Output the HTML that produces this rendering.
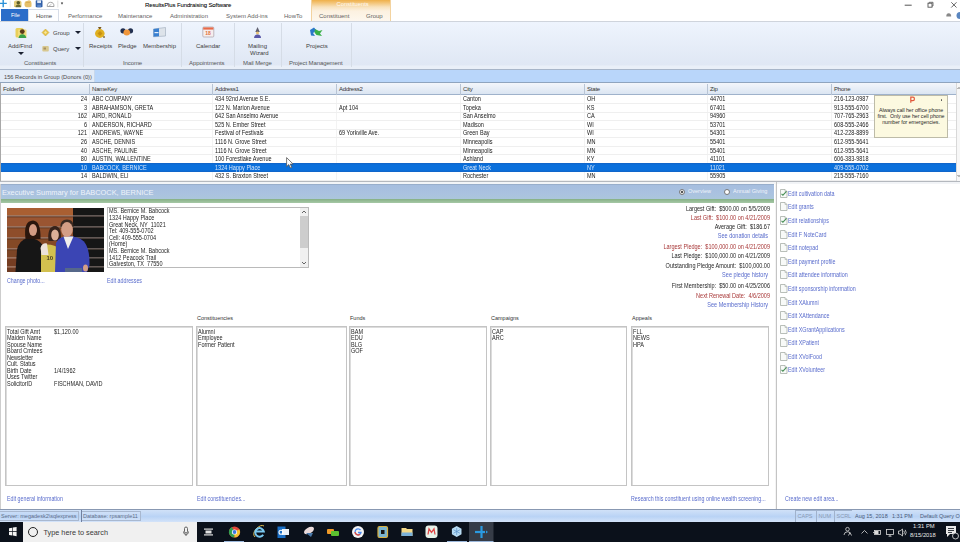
<!DOCTYPE html>
<html><head><meta charset="utf-8"><style>
*{box-sizing:border-box;margin:0;padding:0}
html,body{width:960px;height:542px;overflow:hidden;background:#fff;font-family:"Liberation Sans",sans-serif;color:#222;position:relative}
.ab{position:absolute}
.t{position:absolute;white-space:nowrap;line-height:1}
.s6{font-size:6px}
.c{letter-spacing:-0.2px;color:#1a1a1a}
.g{font-size:6.6px;transform:scaleX(0.84);transform-origin:0 0;color:#262626}
.lnk{color:#586bcc}
.gl{font-size:6.3px;transform:scaleX(0.84);transform-origin:0 0}
.red{color:#a83838}
</style></head><body>

<div class="ab" style="left:0;top:0;width:960px;height:21px;background:#fff"></div>
<div class="ab" style="left:311px;top:0;width:80px;height:21px;background:linear-gradient(#efb04a 0px,#f3c57a 3px,#f8e2bd 7px,#fcf1e0 11px,#fdf7ee 21px);border-left:1px solid #f3d3a0;border-right:1px solid #f3d3a0"></div>
<div class="t" style="left:336.5px;top:2px;font-size:5.8px;color:#fffaf2">Constituents</div>
<div class="t" style="left:145px;top:1.5px;font-size:6px;letter-spacing:-0.12px;color:#000;-webkit-text-stroke:0.06px #000">ResultsPlus Fundraising Software</div>
<svg class="ab" style="left:0;top:0" width="66" height="9" viewBox="0 0 66 9">
<path d="M0 3.4 H6.8 M3.2 0 V7.2" stroke="#2a90d8" stroke-width="1.4"/>
<path d="M10.2 0.5 V7.5" stroke="#e4e4e4" stroke-width="0.8"/>
<path d="M14 2 Q14 0.5 16 0.5 H19.5 Q21.5 0.5 21.5 2.5 V7 H14 Z" fill="#e2cb78"/>
<circle cx="18.3" cy="2.8" r="1.8" fill="#5a5a28"/>
<path d="M15.5 7.2 Q15.6 4.6 18.3 4.6 Q21 4.6 21 7.2 Z" fill="#6a6a30"/>
<path d="M24.5 4 Q24.5 1.2 27 1 L29 0.3 Q31.5 0.5 31.5 3 V6.5 Q31 7.3 29 7.3 H26.5 Q24.5 7 24.5 5 Z" fill="#e6c06a"/>
<path d="M26 2.5 H30" stroke="#c89a40" stroke-width="0.5"/>
<rect x="35.7" y="0.3" width="6.8" height="7" rx="0.8" fill="#3260a8"/>
<rect x="37.2" y="0.3" width="3.8" height="2.8" fill="#dfe8f5"/>
<rect x="37.2" y="4.6" width="3.8" height="2.7" fill="#5a86c8"/>
<path d="M47.2 6.5 Q47.2 2.3 50.6 2.3 Q54 2.3 54 6.5 Z" fill="none" stroke="#9a9a9a" stroke-width="0.9"/>
<path d="M49 6 L51.5 4.2" stroke="#9a9a9a" stroke-width="0.6"/>
<path d="M57.8 0.5 V7.5" stroke="#d8d8d8" stroke-width="0.8"/>
<path d="M60.8 2.5 H63.2 L62 4.8 Z" fill="#333"/>
</svg>
<svg class="ab" style="left:900px;top:0" width="60" height="20" viewBox="900 0 60 20">
<path d="M904.7 5.2 H911.7" stroke="#555" stroke-width="1"/>
<rect x="928" y="3.2" width="4" height="4" fill="none" stroke="#555" stroke-width="0.9"/>
<path d="M929.2 3.2 V2.3 H933 V6 H932" fill="none" stroke="#555" stroke-width="0.8"/>
<path d="M951.3 2.3 L956.5 7.5 M956.5 2.3 L951.3 7.5" stroke="#555" stroke-width="0.9"/>
<path d="M946.3 16.5 Q946.3 13.2 948.7 13.2 Q951.2 13.2 951.2 16.5 Z" fill="#888"/>
<circle cx="960" cy="15.5" r="3.5" fill="#5a86c0"/>
</svg>
<div class="ab" style="left:1px;top:9px;width:27px;height:12px;background:#2b6dc9"></div>
<div class="t" style="left:11px;top:13px;font-size:5.5px;color:#fff">File</div>
<div class="ab" style="left:28px;top:9px;width:31px;height:13px;background:#fdfeff;border:1px solid #d6dde8;border-bottom:none"></div>
<div class="t" style="left:36px;top:13px;font-size:6px;color:#444">Home</div>
<div class="t" style="left:68px;top:13px;font-size:6px;color:#626262">Performance</div>
<div class="t" style="left:118px;top:13px;font-size:6px;color:#626262">Maintenance</div>
<div class="t" style="left:170px;top:13px;font-size:6px;color:#626262">Administration</div>
<div class="t" style="left:226px;top:13px;font-size:6px;color:#626262">System Add-ins</div>
<div class="t" style="left:284px;top:13px;font-size:6px;color:#626262">HowTo</div>
<div class="t" style="left:319px;top:13px;font-size:6px;color:#626262">Constituent</div>
<div class="t" style="left:366px;top:13px;font-size:6px;color:#626262">Group</div>
<div class="ab" style="left:0;top:20.5px;width:960px;height:48.5px;background:linear-gradient(#eef4fd,#e6edf8 50%,#dfe7f4 92%,#e9eff8 93%,#e9eff8);border-top:1px solid #cfd4dc"></div>
<div class="ab" style="left:0;top:69px;width:960px;height:1px;background:#a7b5c9"></div>
<div class="ab" style="left:83px;top:23px;width:1px;height:44px;background:#d5dce6"></div>
<div class="ab" style="left:181px;top:23px;width:1px;height:44px;background:#d5dce6"></div>
<div class="ab" style="left:234px;top:23px;width:1px;height:44px;background:#d5dce6"></div>
<div class="ab" style="left:281px;top:23px;width:1px;height:44px;background:#d5dce6"></div>
<div class="ab" style="left:351px;top:23px;width:1px;height:44px;background:#d5dce6"></div>
<div class="t" style="left:24px;top:60.3px;font-size:6px;letter-spacing:-0.1px;color:#585858">Constituents</div>
<div class="t" style="left:123px;top:60.3px;font-size:6px;letter-spacing:-0.1px;color:#585858">Income</div>
<div class="t" style="left:189px;top:60.3px;font-size:6px;letter-spacing:-0.1px;color:#585858">Appointments</div>
<div class="t" style="left:243px;top:60.3px;font-size:6px;letter-spacing:-0.1px;color:#585858">Mail Merge</div>
<div class="t" style="left:289px;top:60.3px;font-size:6px;letter-spacing:-0.1px;color:#585858">Project Management</div>
<div class="t" style="left:8px;top:43px;font-size:6px;color:#3e3e3e">Add/Find</div>
<div class="t" style="left:89px;top:43px;font-size:6px;color:#3e3e3e">Receipts</div>
<div class="t" style="left:118px;top:43px;font-size:6px;color:#3e3e3e">Pledge</div>
<div class="t" style="left:143px;top:43px;font-size:6px;color:#3e3e3e">Membership</div>
<div class="t" style="left:196px;top:43px;font-size:6px;color:#3e3e3e">Calendar</div>
<div class="t" style="left:248px;top:43px;font-size:6px;color:#3e3e3e">Mailing</div>
<div class="t" style="left:250px;top:50px;font-size:6px;color:#3e3e3e">Wizard</div>
<div class="t" style="left:306px;top:43px;font-size:6px;color:#3e3e3e">Projects</div>
<div class="t" style="left:53px;top:30px;font-size:6px;color:#444">Group</div>
<div class="t" style="left:53px;top:46px;font-size:6px;color:#444">Query</div>
<div class="ab" style="left:74.5px;top:30.5px;width:0;height:0;border-left:3px solid transparent;border-right:3px solid transparent;border-top:3.3px solid #1a2030"></div>
<div class="ab" style="left:74.5px;top:46.5px;width:0;height:0;border-left:3px solid transparent;border-right:3px solid transparent;border-top:3.3px solid #1a2030"></div>
<div class="ab" style="left:18px;top:52px;width:0;height:0;border-left:3px solid transparent;border-right:3px solid transparent;border-top:3.3px solid #1a2030"></div>
<svg class="ab" style="left:0;top:21px" width="340" height="40" viewBox="0 21 340 40">
<g>
<rect x="15.5" y="28" width="8" height="9.5" rx="1.5" fill="#e9cf5a"/>
<rect x="18" y="29.5" width="8.5" height="8.5" rx="1" fill="#f2dc7a"/>
<circle cx="22.3" cy="31.6" r="2.4" fill="#5a3a18"/>
<path d="M18.5 38 Q19 34.2 22.3 34.2 Q25.8 34.2 26.3 38 Z" fill="#3aa048"/>
</g>
<path d="M42 32.5 L45.5 29 L49 32.5 L45.5 36 Z" fill="#e8c448" stroke="#c8a030" stroke-width="0.5"/>
<path d="M44 32.5 L45.5 31 L47 32.5 L45.5 34 Z" fill="#f8e8a0"/>
<rect x="42.3" y="46" width="6.5" height="5.5" rx="1" fill="#d8c890"/>
<rect x="43.5" y="47.5" width="2.5" height="2" fill="#a89060"/>
<path d="M98 27 L101.5 27 L100.5 29 L99 29 Z" fill="#7a5a20"/>
<ellipse cx="99.8" cy="33.5" rx="4.8" ry="4.4" fill="#e0b020"/>
<path d="M97.5 33.5 L100 31 L102.5 33.5 L100 36 Z" fill="#c89010"/>
<circle cx="104" cy="37" r="1" fill="#8a7040"/>
<circle cx="123" cy="30.8" r="2.6" fill="#223050"/>
<circle cx="130.5" cy="30.8" r="2.6" fill="#223050"/>
<ellipse cx="126.8" cy="32.5" rx="3.3" ry="3" fill="#f0963a"/>
<path d="M153.5 29 L165.5 27.5 L165.5 36 L153.5 36.8 Z" fill="#dde3ea" stroke="#9aa8b8" stroke-width="0.6"/>
<path d="M153.5 29 L159 28.3 L159 36.3 L153.5 36.8 Z" fill="#3a80d0"/>
<rect x="154.5" y="32" width="4" height="1.2" fill="#e8f0fa"/>
<rect x="202.8" y="27" width="11" height="10" rx="1" fill="#f6eeee" stroke="#a8a0a8" stroke-width="0.7"/>
<rect x="203.2" y="27.4" width="10.2" height="2.2" fill="#e86a4a"/>
<text x="205.2" y="35.4" font-family="Liberation Sans" font-size="5" font-weight="bold" fill="#e0703a">18</text>
<path d="M257.5 27 L255.3 32 L259.8 32 Z" fill="#606070"/>
<circle cx="257.5" cy="33" r="1.5" fill="#e8c070"/>
<path d="M254 38 Q254 34.5 257.5 34.5 Q261 34.5 261 38 Z" fill="#5a58a8"/>
<path d="M310 30 L314 27.5 L316.5 30.5 L313 33 L315 36 L311 35.5 Z" fill="#2a78c8"/>
<path d="M315 29 L319 31 L322.5 30 L320 33.5 L322 36 L316.5 35 L314.5 32.5 Z" fill="#3ab048"/>
</svg>
<div class="ab" style="left:0;top:70px;width:960px;height:12px;background:#b9d6fa"></div>
<div class="ab" style="left:0;top:70px;width:94.5px;height:12px;background:#e2ebf7;border-right:1px solid #c8d8ec"></div>
<div class="t" style="left:4px;top:75.1px;font-size:5.7px;color:#4a4a4a">156 Records in Group (Donors (0))</div>
<div class="ab" style="left:0;top:82px;width:960px;height:1px;background:#8fa4be"></div>
<div class="ab" style="left:0;top:83px;width:960px;height:99px;background:#fff;border-left:1px solid #a8a8a8"></div>
<div class="ab" style="left:1px;top:83px;width:955px;height:12px;background:linear-gradient(#f3f6fb,#dbe5f2);border-bottom:1px solid #9fb2cb"></div>
<div class="t c" style="left:3px;top:86.3px;font-size:6px;color:#333">FolderID</div>
<div class="ab" style="left:89px;top:84px;width:1px;height:11px;background:#b8c4d4"></div>
<div class="t c" style="left:92px;top:86.3px;font-size:6px;color:#333">NameKey</div>
<div class="ab" style="left:212px;top:84px;width:1px;height:11px;background:#b8c4d4"></div>
<div class="t c" style="left:215px;top:86.3px;font-size:6px;color:#333">Address1</div>
<div class="ab" style="left:336px;top:84px;width:1px;height:11px;background:#b8c4d4"></div>
<div class="t c" style="left:339px;top:86.3px;font-size:6px;color:#333">Address2</div>
<div class="ab" style="left:460px;top:84px;width:1px;height:11px;background:#b8c4d4"></div>
<div class="t c" style="left:463px;top:86.3px;font-size:6px;color:#333">City</div>
<div class="ab" style="left:584px;top:84px;width:1px;height:11px;background:#b8c4d4"></div>
<div class="t c" style="left:587px;top:86.3px;font-size:6px;color:#333">State</div>
<div class="ab" style="left:707px;top:84px;width:1px;height:11px;background:#b8c4d4"></div>
<div class="t c" style="left:710px;top:86.3px;font-size:6px;color:#333">Zip</div>
<div class="ab" style="left:831px;top:84px;width:1px;height:11px;background:#b8c4d4"></div>
<div class="t c" style="left:834px;top:86.3px;font-size:6px;color:#333">Phone</div>
<div class="ab" style="left:89px;top:95px;width:1px;height:86px;background:#f3f3f3"></div>
<div class="ab" style="left:212px;top:95px;width:1px;height:86px;background:#f3f3f3"></div>
<div class="ab" style="left:336px;top:95px;width:1px;height:86px;background:#f3f3f3"></div>
<div class="ab" style="left:460px;top:95px;width:1px;height:86px;background:#f3f3f3"></div>
<div class="ab" style="left:584px;top:95px;width:1px;height:86px;background:#f3f3f3"></div>
<div class="ab" style="left:707px;top:95px;width:1px;height:86px;background:#f3f3f3"></div>
<div class="ab" style="left:831px;top:95px;width:1px;height:86px;background:#f3f3f3"></div>
<div class="ab" style="left:1px;top:103.03999999999999px;width:955px;height:1px;background:#efefef"></div>
<div class="t g" style="left:0;width:87px;text-align:right;transform-origin:100% 0;top:96.3px;color:#1a1a1a">24</div>
<div class="t g" style="left:92px;top:96.3px;color:#1a1a1a">ABC COMPANY</div>
<div class="t g" style="left:215px;top:96.3px;color:#1a1a1a">434 92nd Avenue S.E.</div>
<div class="t g" style="left:463px;top:96.3px;color:#1a1a1a">Canton</div>
<div class="t g" style="left:587px;top:96.3px;color:#1a1a1a">OH</div>
<div class="t g" style="left:710px;top:96.3px;color:#1a1a1a">44701</div>
<div class="t g" style="left:834px;top:96.3px;color:#1a1a1a">216-123-0987</div>
<div class="ab" style="left:1px;top:111.57999999999998px;width:955px;height:1px;background:#efefef"></div>
<div class="t g" style="left:0;width:87px;text-align:right;transform-origin:100% 0;top:104.83999999999999px;color:#1a1a1a">3</div>
<div class="t g" style="left:92px;top:104.83999999999999px;color:#1a1a1a">ABRAHAMSON, GRETA</div>
<div class="t g" style="left:215px;top:104.83999999999999px;color:#1a1a1a">122 N. Marion Avenue</div>
<div class="t g" style="left:339px;top:104.83999999999999px;color:#1a1a1a">Apt 104</div>
<div class="t g" style="left:463px;top:104.83999999999999px;color:#1a1a1a">Topeka</div>
<div class="t g" style="left:587px;top:104.83999999999999px;color:#1a1a1a">KS</div>
<div class="t g" style="left:710px;top:104.83999999999999px;color:#1a1a1a">67401</div>
<div class="t g" style="left:834px;top:104.83999999999999px;color:#1a1a1a">913-555-6700</div>
<div class="ab" style="left:1px;top:120.12px;width:955px;height:1px;background:#efefef"></div>
<div class="t g" style="left:0;width:87px;text-align:right;transform-origin:100% 0;top:113.38px;color:#1a1a1a">162</div>
<div class="t g" style="left:92px;top:113.38px;color:#1a1a1a">AIRD, RONALD</div>
<div class="t g" style="left:215px;top:113.38px;color:#1a1a1a">642 San Anselmo Avenue</div>
<div class="t g" style="left:463px;top:113.38px;color:#1a1a1a">San Anselmo</div>
<div class="t g" style="left:587px;top:113.38px;color:#1a1a1a">CA</div>
<div class="t g" style="left:710px;top:113.38px;color:#1a1a1a">94960</div>
<div class="t g" style="left:834px;top:113.38px;color:#1a1a1a">707-765-2963</div>
<div class="ab" style="left:1px;top:128.66px;width:955px;height:1px;background:#efefef"></div>
<div class="t g" style="left:0;width:87px;text-align:right;transform-origin:100% 0;top:121.92px;color:#1a1a1a">6</div>
<div class="t g" style="left:92px;top:121.92px;color:#1a1a1a">ANDERSON, RICHARD</div>
<div class="t g" style="left:215px;top:121.92px;color:#1a1a1a">525 N. Ember Street</div>
<div class="t g" style="left:463px;top:121.92px;color:#1a1a1a">Madison</div>
<div class="t g" style="left:587px;top:121.92px;color:#1a1a1a">WI</div>
<div class="t g" style="left:710px;top:121.92px;color:#1a1a1a">53701</div>
<div class="t g" style="left:834px;top:121.92px;color:#1a1a1a">608-555-2466</div>
<div class="ab" style="left:1px;top:137.2px;width:955px;height:1px;background:#efefef"></div>
<div class="t g" style="left:0;width:87px;text-align:right;transform-origin:100% 0;top:130.46px;color:#1a1a1a">121</div>
<div class="t g" style="left:92px;top:130.46px;color:#1a1a1a">ANDREWS, WAYNE</div>
<div class="t g" style="left:215px;top:130.46px;color:#1a1a1a">Festival of Festivals</div>
<div class="t g" style="left:339px;top:130.46px;color:#1a1a1a">69 Yorkville Ave.</div>
<div class="t g" style="left:463px;top:130.46px;color:#1a1a1a">Green Bay</div>
<div class="t g" style="left:587px;top:130.46px;color:#1a1a1a">WI</div>
<div class="t g" style="left:710px;top:130.46px;color:#1a1a1a">54301</div>
<div class="t g" style="left:834px;top:130.46px;color:#1a1a1a">412-228-8899</div>
<div class="ab" style="left:1px;top:145.73999999999998px;width:955px;height:1px;background:#efefef"></div>
<div class="t g" style="left:0;width:87px;text-align:right;transform-origin:100% 0;top:139.0px;color:#1a1a1a">26</div>
<div class="t g" style="left:92px;top:139.0px;color:#1a1a1a">ASCHE, DENNIS</div>
<div class="t g" style="left:215px;top:139.0px;color:#1a1a1a">1116 N. Grove Street</div>
<div class="t g" style="left:463px;top:139.0px;color:#1a1a1a">Minneapolis</div>
<div class="t g" style="left:587px;top:139.0px;color:#1a1a1a">MN</div>
<div class="t g" style="left:710px;top:139.0px;color:#1a1a1a">55401</div>
<div class="t g" style="left:834px;top:139.0px;color:#1a1a1a">612-955-5641</div>
<div class="ab" style="left:1px;top:154.28px;width:955px;height:1px;background:#efefef"></div>
<div class="t g" style="left:0;width:87px;text-align:right;transform-origin:100% 0;top:147.54000000000002px;color:#1a1a1a">40</div>
<div class="t g" style="left:92px;top:147.54000000000002px;color:#1a1a1a">ASCHE, PAULINE</div>
<div class="t g" style="left:215px;top:147.54000000000002px;color:#1a1a1a">1116 N. Grove Street</div>
<div class="t g" style="left:463px;top:147.54000000000002px;color:#1a1a1a">Minneapolis</div>
<div class="t g" style="left:587px;top:147.54000000000002px;color:#1a1a1a">MN</div>
<div class="t g" style="left:710px;top:147.54000000000002px;color:#1a1a1a">55401</div>
<div class="t g" style="left:834px;top:147.54000000000002px;color:#1a1a1a">612-955-5641</div>
<div class="ab" style="left:1px;top:162.82px;width:955px;height:1px;background:#efefef"></div>
<div class="t g" style="left:0;width:87px;text-align:right;transform-origin:100% 0;top:156.08px;color:#1a1a1a">80</div>
<div class="t g" style="left:92px;top:156.08px;color:#1a1a1a">AUSTIN, WALLENTINE</div>
<div class="t g" style="left:215px;top:156.08px;color:#1a1a1a">100 Forestlake Avenue</div>
<div class="t g" style="left:463px;top:156.08px;color:#1a1a1a">Ashland</div>
<div class="t g" style="left:587px;top:156.08px;color:#1a1a1a">KY</div>
<div class="t g" style="left:710px;top:156.08px;color:#1a1a1a">41101</div>
<div class="t g" style="left:834px;top:156.08px;color:#1a1a1a">606-383-9818</div>
<div class="ab" style="left:1px;top:163.3px;width:955px;height:8.9px;background:linear-gradient(#1262c4,#0a70dc 20%,#0a70dc 80%,#1262c4)"></div>
<div class="t g" style="left:0;width:87px;text-align:right;transform-origin:100% 0;top:164.62px;color:#d6e6fb">10</div>
<div class="t g" style="left:92px;top:164.62px;color:#d6e6fb">BABCOCK, BERNICE</div>
<div class="t g" style="left:215px;top:164.62px;color:#d6e6fb">1324 Happy Place</div>
<div class="t g" style="left:463px;top:164.62px;color:#d6e6fb">Great Neck</div>
<div class="t g" style="left:587px;top:164.62px;color:#d6e6fb">NY</div>
<div class="t g" style="left:710px;top:164.62px;color:#d6e6fb">11021</div>
<div class="t g" style="left:834px;top:164.62px;color:#d6e6fb">409-555-0702</div>
<div class="ab" style="left:1px;top:179.89999999999998px;width:955px;height:1px;background:#efefef"></div>
<div class="t g" style="left:0;width:87px;text-align:right;transform-origin:100% 0;top:173.16px;color:#1a1a1a">14</div>
<div class="t g" style="left:92px;top:173.16px;color:#1a1a1a">BALDWIN, ELI</div>
<div class="t g" style="left:215px;top:173.16px;color:#1a1a1a">432 S. Braxton Street</div>
<div class="t g" style="left:463px;top:173.16px;color:#1a1a1a">Rochester</div>
<div class="t g" style="left:587px;top:173.16px;color:#1a1a1a">MN</div>
<div class="t g" style="left:710px;top:173.16px;color:#1a1a1a">55905</div>
<div class="t g" style="left:834px;top:173.16px;color:#1a1a1a">215-555-7160</div>
<div class="ab" style="left:956px;top:83px;width:4px;height:98px;background:#f7f7f7;border-left:1px solid #d8d8d8"></div>
<svg class="ab" style="left:956px;top:83px" width="4" height="98" viewBox="0 0 4 98"><path d="M1.5 6 L3 4.5 L4.5 6" fill="none" stroke="#555" stroke-width="0.8"/><path d="M1.5 92 L3 93.5 L4.5 92" fill="none" stroke="#555" stroke-width="0.8"/></svg>
<div class="ab" style="left:0;top:181px;width:960px;height:1px;background:#b4b8be"></div>
<div class="ab" style="left:874px;top:95px;width:73.5px;height:42.5px;background:#fcf9e0;border:1px solid #bdbba8"></div>
<svg class="ab" style="left:908px;top:95.5px" width="8" height="8" viewBox="0 0 8 8"><path d="M2.8 6.8 V1.2 H5 Q6.4 1.2 6.4 2.9 Q6.4 4.6 5 4.6 H2.8" fill="none" stroke="#e2583a" stroke-width="1.2"/></svg>
<div class="ab" style="left:940.5px;top:99.3px;width:1.6px;height:1.6px;background:#555;border-radius:50%"></div>
<div class="t" style="white-space:pre;left:874px;width:74px;text-align:center;top:107.8px;font-size:5.3px;letter-spacing:-0.05px;color:#2a2a2a">Always call her office phone</div>
<div class="t" style="white-space:pre;left:874px;width:74px;text-align:center;top:114.0px;font-size:5.3px;letter-spacing:-0.05px;color:#2a2a2a">first.  Only use her cell phone</div>
<div class="t" style="white-space:pre;left:874px;width:74px;text-align:center;top:120.2px;font-size:5.3px;letter-spacing:-0.05px;color:#2a2a2a">number for emergencies.</div>
<div class="ab" style="left:0;top:182px;width:960px;height:2px;background:#f2f4f7"></div>
<div class="ab" style="left:0;top:184px;width:774px;height:15px;background:linear-gradient(#a6bedf,#aac2e0 60%,#abc6dc);border-top:1px solid #98aecb"></div>
<div class="ab" style="left:0;top:199px;width:774px;height:3.5px;background:linear-gradient(#86b086,#a6c8a6)"></div>
<div class="t" style="left:2px;top:188.8px;font-size:7.4px;color:#eef3fa">Executive Summary for BABCOCK, BERNICE</div>
<div class="ab" style="left:679px;top:189px;width:6px;height:6px;border-radius:50%;background:#eee;border:1px solid #777"></div><div class="ab" style="left:681px;top:191px;width:2px;height:2px;border-radius:50%;background:#222"></div>
<div class="t" style="left:688px;top:189px;font-size:5.5px;color:#f0f4fa">Overview</div>
<div class="ab" style="left:724px;top:189px;width:6px;height:6px;border-radius:50%;background:#fff;border:1px solid #777"></div>
<div class="t" style="left:733px;top:189px;font-size:5.5px;color:#f0f4fa">Annual Giving</div>
<div class="ab" style="left:774.5px;top:182px;width:1.5px;height:327px;background:#f4f4f4"></div>
<div class="ab" style="left:776px;top:182px;width:1px;height:327px;background:#c4c4c4"></div>
<div class="ab" style="left:0;top:184px;width:1px;height:325px;background:#cdcdcd"></div>
<svg class="ab" style="left:7px;top:208px" width="97" height="64" viewBox="0 0 97 64">
<defs><filter id="bl" x="-5%" y="-5%" width="110%" height="110%"><feGaussianBlur stdDeviation="0.55"/></filter></defs>
<g filter="url(#bl)">
<rect width="97" height="64" fill="#8a4a2a"/>
<rect x="0" y="0" width="66" height="7.5" fill="#a95e30"/>
<rect x="0" y="9" width="66" height="9" fill="#9a5530"/>
<rect x="0" y="20" width="66" height="9" fill="#8e4e2c"/>
<rect x="0" y="31" width="66" height="9" fill="#844828"/>
<rect x="0" y="42" width="66" height="7" fill="#7c4426"/>
<rect x="0" y="51" width="66" height="7" fill="#743e24"/>
<rect x="0" y="60" width="66" height="4" fill="#6e3a22"/>
<rect x="66" y="0" width="31" height="64" fill="#161212"/>
<g fill="#a89890" opacity="0.75">
<rect x="0" y="7.3" width="97" height="1.3"/><rect x="0" y="18.3" width="97" height="1.3"/><rect x="0" y="29.3" width="97" height="1.3"/><rect x="0" y="40.3" width="97" height="1.2"/><rect x="0" y="49.3" width="97" height="1.1"/><rect x="0" y="58.3" width="97" height="1.1"/>
</g>
<g fill="#2a1a14" opacity="0.6">
<rect x="0" y="8.6" width="97" height="0.7"/><rect x="0" y="19.6" width="97" height="0.7"/><rect x="0" y="30.6" width="97" height="0.7"/><rect x="0" y="41.5" width="97" height="0.7"/>
</g>
<path d="M8.5 64 L10 42 Q12 32 21 30 Q31 30 35.5 37 L37 64 Z" fill="#151213"/>
<path d="M18.5 31 Q16 13 26 12.5 Q34 13 33.5 31 Z" fill="#2c1810"/>
<ellipse cx="26" cy="22" rx="4" ry="6" fill="#d49c84"/>
<path d="M34 64 L34 43 Q35 37 40 36.5 Q48 36.5 53 41 L56 64 Z" fill="#d2c050"/>
<path d="M33.5 40 Q35 34.5 40 35.5 L41.5 47 L34.5 47 Z" fill="#ece2da"/>
<path d="M41.5 33 Q40 18.5 48 18 Q55 18.5 54 33 Z" fill="#35221a"/>
<ellipse cx="48" cy="27" rx="3.8" ry="5.5" fill="#dcaf98"/>
<text x="39.5" y="52" font-family="Liberation Sans" font-size="6" font-weight="bold" fill="#4a4020">10</text>
<path d="M48 64 L49 35 Q52 28.5 60 28 Q71 28 77 33.5 Q83 41 82.5 57 L80 64 Z" fill="#3a44b4"/>
<path d="M56.5 28.5 L61 41 L66.5 28.5 Z" fill="#f0eeec"/>
<path d="M53.5 19 Q53 11.5 60 11.5 Q67 11.5 66.5 19 Z" fill="#3a2a22"/>
<ellipse cx="60" cy="21.5" rx="5.8" ry="7.5" fill="#d49e86"/>
<ellipse cx="78.5" cy="60" rx="2.5" ry="3.5" fill="#d49e86"/>
<rect x="58" y="60" width="17" height="4" fill="#56688a"/>
</g>
</svg>
<div class="t lnk gl" style="left:7px;top:277.8px">Change photo...</div>
<div class="t lnk gl" style="left:107px;top:277.8px">Edit addresses</div>
<div class="ab" style="left:107px;top:207px;width:202px;height:61px;border:1px solid #bababa;background:#fff"></div>
<div class="ab" style="left:300px;top:208px;width:8px;height:59px;background:#f0f0f0"></div>
<div class="ab" style="left:300px;top:216px;width:8px;height:32px;background:#cdcdcd"></div>
<svg class="ab" style="left:300px;top:208px" width="8" height="59" viewBox="0 0 8 59"><path d="M2 5 L4 3 L6 5" fill="none" stroke="#555" stroke-width="0.9"/><path d="M2 54 L4 56 L6 54" fill="none" stroke="#555" stroke-width="0.9"/></svg>
<div class="t g" style="white-space:pre;left:109px;top:208.3px">MS. Bernice M. Babcock</div>
<div class="t g" style="white-space:pre;left:109px;top:214.9px">1324 Happy Place</div>
<div class="t g" style="white-space:pre;left:109px;top:221.5px">Great Neck, NY  11021</div>
<div class="t g" style="white-space:pre;left:109px;top:228.10000000000002px">Tel: 409-555-0702</div>
<div class="t g" style="white-space:pre;left:109px;top:234.70000000000002px">Cell: 409-555-0704</div>
<div class="t g" style="white-space:pre;left:109px;top:241.3px">(Home)</div>
<div class="t g" style="white-space:pre;left:109px;top:247.9px">MS. Bernice M. Babcock</div>
<div class="t g" style="white-space:pre;left:109px;top:254.5px">1412 Peacock Trail</div>
<div class="t g" style="white-space:pre;left:109px;top:261.1px">Galveston, TX  77550</div>
<div class="t g " style="white-space:pre;left:570px;width:200px;text-align:right;transform-origin:100% 0;top:206.2px">Largest Gift:  $500.00 on 5/5/2009</div>
<div class="t g red" style="white-space:pre;left:570px;width:200px;text-align:right;transform-origin:100% 0;top:215.2px">Last Gift:  $100.00 on 4/21/2009</div>
<div class="t g " style="white-space:pre;left:570px;width:200px;text-align:right;transform-origin:100% 0;top:224.2px">Average Gift:  $186.67</div>
<div class="t g lnk" style="white-space:pre;left:568px;width:200px;text-align:right;transform-origin:100% 0;top:232.7px">See donation details</div>
<div class="t g red" style="white-space:pre;left:570px;width:200px;text-align:right;transform-origin:100% 0;top:244.2px">Largest Pledge:  $100,000.00 on 4/21/2009</div>
<div class="t g " style="white-space:pre;left:570px;width:200px;text-align:right;transform-origin:100% 0;top:253.2px">Last Pledge:  $100,000.00 on 4/21/2009</div>
<div class="t g " style="white-space:pre;left:570px;width:200px;text-align:right;transform-origin:100% 0;top:262.7px">Outstanding Pledge Amount:  $100,000.00</div>
<div class="t g lnk" style="white-space:pre;left:568px;width:200px;text-align:right;transform-origin:100% 0;top:271.7px">See pledge history</div>
<div class="t g " style="white-space:pre;left:570px;width:200px;text-align:right;transform-origin:100% 0;top:283.2px">First Membership:  $50.00 on 4/25/2006</div>
<div class="t g red" style="white-space:pre;left:570px;width:200px;text-align:right;transform-origin:100% 0;top:293.2px">Next Renewal Date:  4/6/2009</div>
<div class="t g lnk" style="white-space:pre;left:568px;width:200px;text-align:right;transform-origin:100% 0;top:302.2px">See Membership History</div>
<div class="ab" style="left:5px;top:326px;width:188px;height:160px;border:1px solid #c4c4c4;box-shadow:inset 1px 1px 0 #dcdcdc;background:#fff"></div>
<div class="t g" style="left:7px;top:328.6px">Total Gift Amt</div>
<div class="t g" style="left:7px;top:335.1px">Maiden Name</div>
<div class="t g" style="left:7px;top:341.6px">Spouse Name</div>
<div class="t g" style="left:7px;top:348.1px">Board Cmtees</div>
<div class="t g" style="left:7px;top:354.6px">Newsletter</div>
<div class="t g" style="left:7px;top:361.1px">Cult. Status</div>
<div class="t g" style="left:7px;top:367.6px">Birth Date</div>
<div class="t g" style="left:7px;top:374.1px">Uses Twitter</div>
<div class="t g" style="left:7px;top:380.6px">SolicitorID</div>
<div class="ab" style="left:196px;top:326px;width:151px;height:160px;border:1px solid #c4c4c4;box-shadow:inset 1px 1px 0 #dcdcdc;background:#fff"></div>
<div class="t" style="left:197px;top:316px;font-size:5.5px;color:#333">Constituencies</div>
<div class="t g" style="left:198px;top:328.6px">Alumni</div>
<div class="t g" style="left:198px;top:335.1px">Employee</div>
<div class="t g" style="left:198px;top:341.6px">Former Patient</div>
<div class="ab" style="left:349px;top:326px;width:138px;height:160px;border:1px solid #c4c4c4;box-shadow:inset 1px 1px 0 #dcdcdc;background:#fff"></div>
<div class="t" style="left:350px;top:316px;font-size:5.5px;color:#333">Funds</div>
<div class="t g" style="left:351px;top:328.6px">BAM</div>
<div class="t g" style="left:351px;top:335.1px">EDU</div>
<div class="t g" style="left:351px;top:341.6px">BLG</div>
<div class="t g" style="left:351px;top:348.1px">GOF</div>
<div class="ab" style="left:490px;top:326px;width:137px;height:160px;border:1px solid #c4c4c4;box-shadow:inset 1px 1px 0 #dcdcdc;background:#fff"></div>
<div class="t" style="left:491px;top:316px;font-size:5.5px;color:#333">Campaigns</div>
<div class="t g" style="left:492px;top:328.6px">CAP</div>
<div class="t g" style="left:492px;top:335.1px">ARC</div>
<div class="ab" style="left:631px;top:326px;width:138px;height:160px;border:1px solid #c4c4c4;box-shadow:inset 1px 1px 0 #dcdcdc;background:#fff"></div>
<div class="t" style="left:632px;top:316px;font-size:5.5px;color:#333">Appeals</div>
<div class="t g" style="left:633px;top:328.6px">FLL</div>
<div class="t g" style="left:633px;top:335.1px">NEWS</div>
<div class="t g" style="left:633px;top:341.6px">HPA</div>
<div class="t g" style="left:54px;top:328.6px">$1,120.00</div>
<div class="t g" style="left:54px;top:367.6px">1/4/1962</div>
<div class="t g" style="left:54px;top:380.6px">FISCHMAN, DAVID</div>
<div class="t lnk gl" style="left:7px;top:496.2px">Edit general information</div>
<div class="t lnk gl" style="left:197px;top:496.2px">Edit constituencies...</div>
<div class="t lnk gl" style="left:631px;top:496.2px">Research this constituent using online wealth screening...</div>
<svg class="ab" style="left:779.5px;top:188.8px" width="8" height="9" viewBox="0 0 8 9"><path d="M0.5 0.5 H5 L7 2.5 V8.5 H0.5 Z" fill="#f8faf8" stroke="#a8aea8" stroke-width="0.8"/><path d="M5 0.5 V2.5 H7" fill="none" stroke="#a8aea8" stroke-width="0.6"/><path d="M1.5 4.8 L2.9 6.2 L6.5 2.4" fill="none" stroke="#4a9058" stroke-width="1.1"/></svg>
<div class="t lnk" style="left:788px;top:190.9px;font-size:6.4px;transform:scaleX(0.84);transform-origin:0 0">Edit cultivation data</div>
<svg class="ab" style="left:779.5px;top:202.38000000000002px" width="8" height="9" viewBox="0 0 8 9"><path d="M0.5 0.5 H5 L7 2.5 V8.5 H0.5 Z" fill="#f8faf8" stroke="#a8aea8" stroke-width="0.8"/><path d="M5 0.5 V2.5 H7" fill="none" stroke="#a8aea8" stroke-width="0.6"/></svg>
<div class="t lnk" style="left:788px;top:204.48000000000002px;font-size:6.4px;transform:scaleX(0.84);transform-origin:0 0">Edit grants</div>
<svg class="ab" style="left:779.5px;top:215.96px" width="8" height="9" viewBox="0 0 8 9"><path d="M0.5 0.5 H5 L7 2.5 V8.5 H0.5 Z" fill="#f8faf8" stroke="#a8aea8" stroke-width="0.8"/><path d="M5 0.5 V2.5 H7" fill="none" stroke="#a8aea8" stroke-width="0.6"/><path d="M1.5 4.8 L2.9 6.2 L6.5 2.4" fill="none" stroke="#4a9058" stroke-width="1.1"/></svg>
<div class="t lnk" style="left:788px;top:218.06px;font-size:6.4px;transform:scaleX(0.84);transform-origin:0 0">Edit relationships</div>
<svg class="ab" style="left:779.5px;top:229.54000000000002px" width="8" height="9" viewBox="0 0 8 9"><path d="M0.5 0.5 H5 L7 2.5 V8.5 H0.5 Z" fill="#f8faf8" stroke="#a8aea8" stroke-width="0.8"/><path d="M5 0.5 V2.5 H7" fill="none" stroke="#a8aea8" stroke-width="0.6"/></svg>
<div class="t lnk" style="left:788px;top:231.64000000000001px;font-size:6.4px;transform:scaleX(0.84);transform-origin:0 0">Edit F NoteCard</div>
<svg class="ab" style="left:779.5px;top:243.12px" width="8" height="9" viewBox="0 0 8 9"><path d="M0.5 0.5 H5 L7 2.5 V8.5 H0.5 Z" fill="#f8faf8" stroke="#a8aea8" stroke-width="0.8"/><path d="M5 0.5 V2.5 H7" fill="none" stroke="#a8aea8" stroke-width="0.6"/></svg>
<div class="t lnk" style="left:788px;top:245.22px;font-size:6.4px;transform:scaleX(0.84);transform-origin:0 0">Edit notepad</div>
<svg class="ab" style="left:779.5px;top:256.70000000000005px" width="8" height="9" viewBox="0 0 8 9"><path d="M0.5 0.5 H5 L7 2.5 V8.5 H0.5 Z" fill="#f8faf8" stroke="#a8aea8" stroke-width="0.8"/><path d="M5 0.5 V2.5 H7" fill="none" stroke="#a8aea8" stroke-width="0.6"/></svg>
<div class="t lnk" style="left:788px;top:258.80000000000007px;font-size:6.4px;transform:scaleX(0.84);transform-origin:0 0">Edit payment profile</div>
<svg class="ab" style="left:779.5px;top:270.28000000000003px" width="8" height="9" viewBox="0 0 8 9"><path d="M0.5 0.5 H5 L7 2.5 V8.5 H0.5 Z" fill="#f8faf8" stroke="#a8aea8" stroke-width="0.8"/><path d="M5 0.5 V2.5 H7" fill="none" stroke="#a8aea8" stroke-width="0.6"/></svg>
<div class="t lnk" style="left:788px;top:272.38000000000005px;font-size:6.4px;transform:scaleX(0.84);transform-origin:0 0">Edit attendee information</div>
<svg class="ab" style="left:779.5px;top:283.86px" width="8" height="9" viewBox="0 0 8 9"><path d="M0.5 0.5 H5 L7 2.5 V8.5 H0.5 Z" fill="#f8faf8" stroke="#a8aea8" stroke-width="0.8"/><path d="M5 0.5 V2.5 H7" fill="none" stroke="#a8aea8" stroke-width="0.6"/></svg>
<div class="t lnk" style="left:788px;top:285.96000000000004px;font-size:6.4px;transform:scaleX(0.84);transform-origin:0 0">Edit sponsorship information</div>
<svg class="ab" style="left:779.5px;top:297.44px" width="8" height="9" viewBox="0 0 8 9"><path d="M0.5 0.5 H5 L7 2.5 V8.5 H0.5 Z" fill="#f8faf8" stroke="#a8aea8" stroke-width="0.8"/><path d="M5 0.5 V2.5 H7" fill="none" stroke="#a8aea8" stroke-width="0.6"/></svg>
<div class="t lnk" style="left:788px;top:299.54px;font-size:6.4px;transform:scaleX(0.84);transform-origin:0 0">Edit XAlumni</div>
<svg class="ab" style="left:779.5px;top:311.02px" width="8" height="9" viewBox="0 0 8 9"><path d="M0.5 0.5 H5 L7 2.5 V8.5 H0.5 Z" fill="#f8faf8" stroke="#a8aea8" stroke-width="0.8"/><path d="M5 0.5 V2.5 H7" fill="none" stroke="#a8aea8" stroke-width="0.6"/></svg>
<div class="t lnk" style="left:788px;top:313.12px;font-size:6.4px;transform:scaleX(0.84);transform-origin:0 0">Edit XAttendance</div>
<svg class="ab" style="left:779.5px;top:324.6px" width="8" height="9" viewBox="0 0 8 9"><path d="M0.5 0.5 H5 L7 2.5 V8.5 H0.5 Z" fill="#f8faf8" stroke="#a8aea8" stroke-width="0.8"/><path d="M5 0.5 V2.5 H7" fill="none" stroke="#a8aea8" stroke-width="0.6"/></svg>
<div class="t lnk" style="left:788px;top:326.70000000000005px;font-size:6.4px;transform:scaleX(0.84);transform-origin:0 0">Edit XGrantApplications</div>
<svg class="ab" style="left:779.5px;top:338.18px" width="8" height="9" viewBox="0 0 8 9"><path d="M0.5 0.5 H5 L7 2.5 V8.5 H0.5 Z" fill="#f8faf8" stroke="#a8aea8" stroke-width="0.8"/><path d="M5 0.5 V2.5 H7" fill="none" stroke="#a8aea8" stroke-width="0.6"/></svg>
<div class="t lnk" style="left:788px;top:340.28000000000003px;font-size:6.4px;transform:scaleX(0.84);transform-origin:0 0">Edit XPatient</div>
<svg class="ab" style="left:779.5px;top:351.76px" width="8" height="9" viewBox="0 0 8 9"><path d="M0.5 0.5 H5 L7 2.5 V8.5 H0.5 Z" fill="#f8faf8" stroke="#a8aea8" stroke-width="0.8"/><path d="M5 0.5 V2.5 H7" fill="none" stroke="#a8aea8" stroke-width="0.6"/></svg>
<div class="t lnk" style="left:788px;top:353.86px;font-size:6.4px;transform:scaleX(0.84);transform-origin:0 0">Edit XVolFood</div>
<svg class="ab" style="left:779.5px;top:365.34000000000003px" width="8" height="9" viewBox="0 0 8 9"><path d="M0.5 0.5 H5 L7 2.5 V8.5 H0.5 Z" fill="#f8faf8" stroke="#a8aea8" stroke-width="0.8"/><path d="M5 0.5 V2.5 H7" fill="none" stroke="#a8aea8" stroke-width="0.6"/><path d="M1.5 4.8 L2.9 6.2 L6.5 2.4" fill="none" stroke="#4a9058" stroke-width="1.1"/></svg>
<div class="t lnk" style="left:788px;top:367.44000000000005px;font-size:6.4px;transform:scaleX(0.84);transform-origin:0 0">Edit XVolunteer</div>
<div class="t lnk gl" style="left:785px;top:496.2px">Create new edit area...</div>
<svg class="ab" style="left:286px;top:156.5px" width="9" height="12" viewBox="0 0 9 12"><path d="M0.6 0.6 L0.6 9.5 L2.8 7.6 L4.4 11 L5.8 10.4 L4.3 7.1 L7.2 7.1 Z" fill="#fff" stroke="#555" stroke-width="0.8" stroke-linejoin="round"/></svg>
<div class="ab" style="left:0;top:508.5px;width:960px;height:1.5px;background:#8898b2"></div>
<div class="ab" style="left:0;top:510px;width:960px;height:12px;background:linear-gradient(#d0e1f8,#b9d3f5 55%,#d3e3f9)"></div>
<div class="t" style="left:1px;top:514px;font-size:5.5px;color:#5f6f8a">Server: megadesk2\sqlexpress</div>
<div class="ab" style="left:0;top:511px;width:79px;height:10px;border:1px solid #a8b8d0;border-left:none"></div>
<div class="ab" style="left:81px;top:511px;width:60px;height:10px;border:1px solid #a8b8d0;background:rgba(255,255,255,0.12)"></div>
<div class="ab" style="left:81px;top:510px;width:1px;height:12px;background:#7080a0"></div>
<div class="t" style="left:83px;top:514px;font-size:5.5px;color:#5f6f8a">Database: rpsample11</div>
<div class="ab" style="left:795px;top:510px;width:21px;height:12px;border-left:1px solid #a0b2cc;border-top:1px solid #a0b2cc"></div>
<div class="t" style="left:797.5px;top:514px;font-size:5.5px;color:#8a9ab4">CAPS</div>
<div class="ab" style="left:816px;top:510px;width:18px;height:12px;border-left:1px solid #a0b2cc;border-top:1px solid #a0b2cc"></div>
<div class="t" style="left:818.5px;top:514px;font-size:5.5px;color:#8a9ab4">NUM</div>
<div class="ab" style="left:834px;top:510px;width:18px;height:12px;border-left:1px solid #a0b2cc;border-top:1px solid #a0b2cc"></div>
<div class="t" style="left:836.5px;top:514px;font-size:5.5px;color:#8a9ab4">SCRL</div>
<div class="t" style="left:855px;top:514px;font-size:5.5px;color:#4a5a78">Aug 15, 2018</div>
<div class="t" style="left:892px;top:514px;font-size:5.5px;color:#4a5a78">1:31 PM</div>
<div class="t" style="left:920px;top:514px;font-size:5.5px;color:#4a5a78">Default Query O</div>
<div class="ab" style="left:0;top:522px;width:960px;height:20px;background:#0b111b"></div>
<div class="ab" style="left:23px;top:522px;width:174px;height:20px;background:#f0f0f0"></div>
<svg class="ab" style="left:0;top:522px" width="23" height="20" viewBox="0 0 23 20"><g fill="#f4f4f4"><path d="M9 6.2 L12.3 5.7 V9.3 H9 Z"/><path d="M12.9 5.6 L16.6 5 V9.3 H12.9 Z"/><path d="M9 9.9 H12.3 V13.5 L9 13 Z"/><path d="M12.9 9.9 H16.6 V14.2 L12.9 13.6 Z"/></g></svg>
<div class="ab" style="left:28px;top:527px;width:10px;height:10px;border-radius:50%;border:1.5px solid #222"></div>
<div class="t" style="left:43.5px;top:528.5px;font-size:7.3px;color:#3a3a3a">Type here to search</div>
<svg class="ab" style="left:180px;top:522px" width="320" height="20" viewBox="0 0 320 20">
<g stroke="#555" stroke-width="0.9" fill="none"><rect x="4.5" y="5" width="3" height="6" rx="1.5"/><path d="M3.5 9.5 Q3.5 12.5 6 12.5 Q8.5 12.5 8.5 9.5 M6 12.5 V14"/></g>
<g fill="#e0e0e0"><rect x="24" y="6.5" width="9" height="1.2"/><rect x="25.5" y="8.5" width="6" height="3"/><rect x="24" y="12.3" width="9" height="1.2"/></g>
<circle cx="54.5" cy="10" r="5.6" fill="#e0473a"/>
<path d="M54.5 10 L49.6 12.8 A5.6 5.6 0 0 1 51.8 5.1 Z" fill="#2fa050"/>
<path d="M54.5 10 L54.5 15.6 A5.6 5.6 0 0 1 49.6 12.8 Z" fill="#2fa050"/>
<path d="M54.5 10 L59.4 7.2 A5.6 5.6 0 0 1 54.5 15.6 Z" fill="#f2c230"/>
<circle cx="54.5" cy="10" r="2.6" fill="#fff"/><circle cx="54.5" cy="10" r="1.9" fill="#3b78e0"/>
<rect x="44" y="19" width="20" height="1" fill="#9bb7db"/>
<path d="M75 15 Q72 12 76 7 Q81 2 84 4" fill="none" stroke="#e6c050" stroke-width="1"/>
<path d="M83.2 12.8 A4.3 4.3 0 1 1 83.8 9.5 H75.5" fill="none" stroke="#7ac8f0" stroke-width="2"/>
<rect x="97.5" y="4.5" width="8" height="11.5" fill="#1a6fc6"/>
<rect x="102" y="7" width="7" height="6" fill="#e8f0f8"/>
<circle cx="101" cy="10.2" r="2" fill="none" stroke="#fff" stroke-width="1.1"/>
<ellipse cx="129" cy="8.5" rx="5.5" ry="3" transform="rotate(-30 129 8.5)" fill="#eadada"/>
<path d="M126 11 L131 15 L133 11 Z" fill="#4a78a8"/>
<rect x="147" y="7" width="7" height="5" rx="1" fill="#f09a28"/>
<rect x="151" y="9" width="8" height="5" rx="1" fill="#5cc030"/>
<circle cx="178" cy="10" r="6" fill="#f4f4f4"/>
<path d="M180.5 8 A3 3 0 1 0 181 10.5 H178" fill="none" stroke="#4a8af0" stroke-width="1.3"/>
<path d="M175 10 A3 3 0 0 0 180 12.2" fill="none" stroke="#e04a3a" stroke-width="1.3"/>
<rect x="198" y="4.5" width="9.5" height="11" rx="1.5" fill="#78b4d0" stroke="#d8b040" stroke-width="1.2"/>
<rect x="201" y="8" width="3.5" height="4" fill="#151515"/>
<path d="M221.5 6 H226 L227 7 H232.5 V14 H221.5 Z" fill="#f3d98a"/>
<rect x="221.5" y="10.5" width="11" height="3.5" fill="#7ab0d8"/>
<rect x="245.5" y="3.5" width="12" height="12.5" rx="3" fill="#e8f3ea"/>
<path d="M248 12.5 L249 7 L251.5 10.5 L254 7 L255 12.5" fill="none" stroke="#e04a4a" stroke-width="1.3"/>
<path d="M276.7 4 L281.5 6.8 V12.3 L276.7 15 L271.9 12.3 V6.8 Z" fill="#b8dcf4"/>
<g stroke="#5a90c8" stroke-width="0.7"><path d="M276.7 6 V13 M273.5 7.8 L279.9 11.2 M273.5 11.2 L279.9 7.8"/></g>
<rect x="267" y="19" width="20" height="1" fill="#9bb7db"/>
<rect x="289" y="0" width="24.5" height="20" fill="#363c47"/>
<rect x="289" y="19" width="24.5" height="1" fill="#9bb7db"/>
<path d="M295 10 H305" stroke="#2a9ae0" stroke-width="2.2"/>
<path d="M301.5 4 V16" stroke="#2a9ae0" stroke-width="2.2"/>
<path d="M306 8.5 L308 10 L306 11.5 Z" fill="#2a9ae0"/>
</svg>
<svg class="ab" style="left:840px;top:522px" width="120" height="20" viewBox="0 0 120 20">
<g stroke="#dcdcdc" stroke-width="0.8" fill="none">
<circle cx="7.5" cy="7.2" r="1.8"/><path d="M4 13 Q4.2 9.8 7.5 9.8 Q9.3 9.8 10 10.8"/><path d="M8.5 13.5 L10 10.5 L11.5 13.5"/>
<path d="M21.5 11.5 L24.5 8.5 L27.5 11.5"/>
<rect x="34.5" y="8.5" width="6" height="4"/><path d="M33 10.5 H34.5"/>
<rect x="46.5" y="7.5" width="7" height="5"/><path d="M48.5 14.2 H51.5 M50 12.5 V14.2"/>
<path d="M58.5 9 H60 L62.5 7 V14 L60 12 H58.5 Z"/>
<path d="M63.8 8.8 Q65 10.5 63.8 12.2"/><path d="M65.2 7.8 Q67.2 10.5 65.2 13.2"/>
</g>
<rect x="35" y="9" width="3.5" height="3" fill="#dcdcdc"/>
</svg>
<div class="t" style="left:913px;top:524.3px;font-size:5.8px;color:#e8e8e8">1:31 PM</div>
<div class="t" style="left:910px;top:532.5px;font-size:5.8px;color:#e8e8e8">8/15/2018</div>
<svg class="ab" style="left:944px;top:524px" width="16" height="18" viewBox="0 0 16 18">
<path d="M2 2 H12 V10 H6 L3 13 V10 H2 Z" fill="#e8e8e8"/>
<g stroke="#0b111b" stroke-width="0.8"><path d="M4 4.5 H10 M4 6.5 H10 M4 8.5 H8"/></g>
<circle cx="11.5" cy="12" r="3" fill="#0b111b" stroke="#e8e8e8" stroke-width="0.8"/>
</svg>
</body></html>
